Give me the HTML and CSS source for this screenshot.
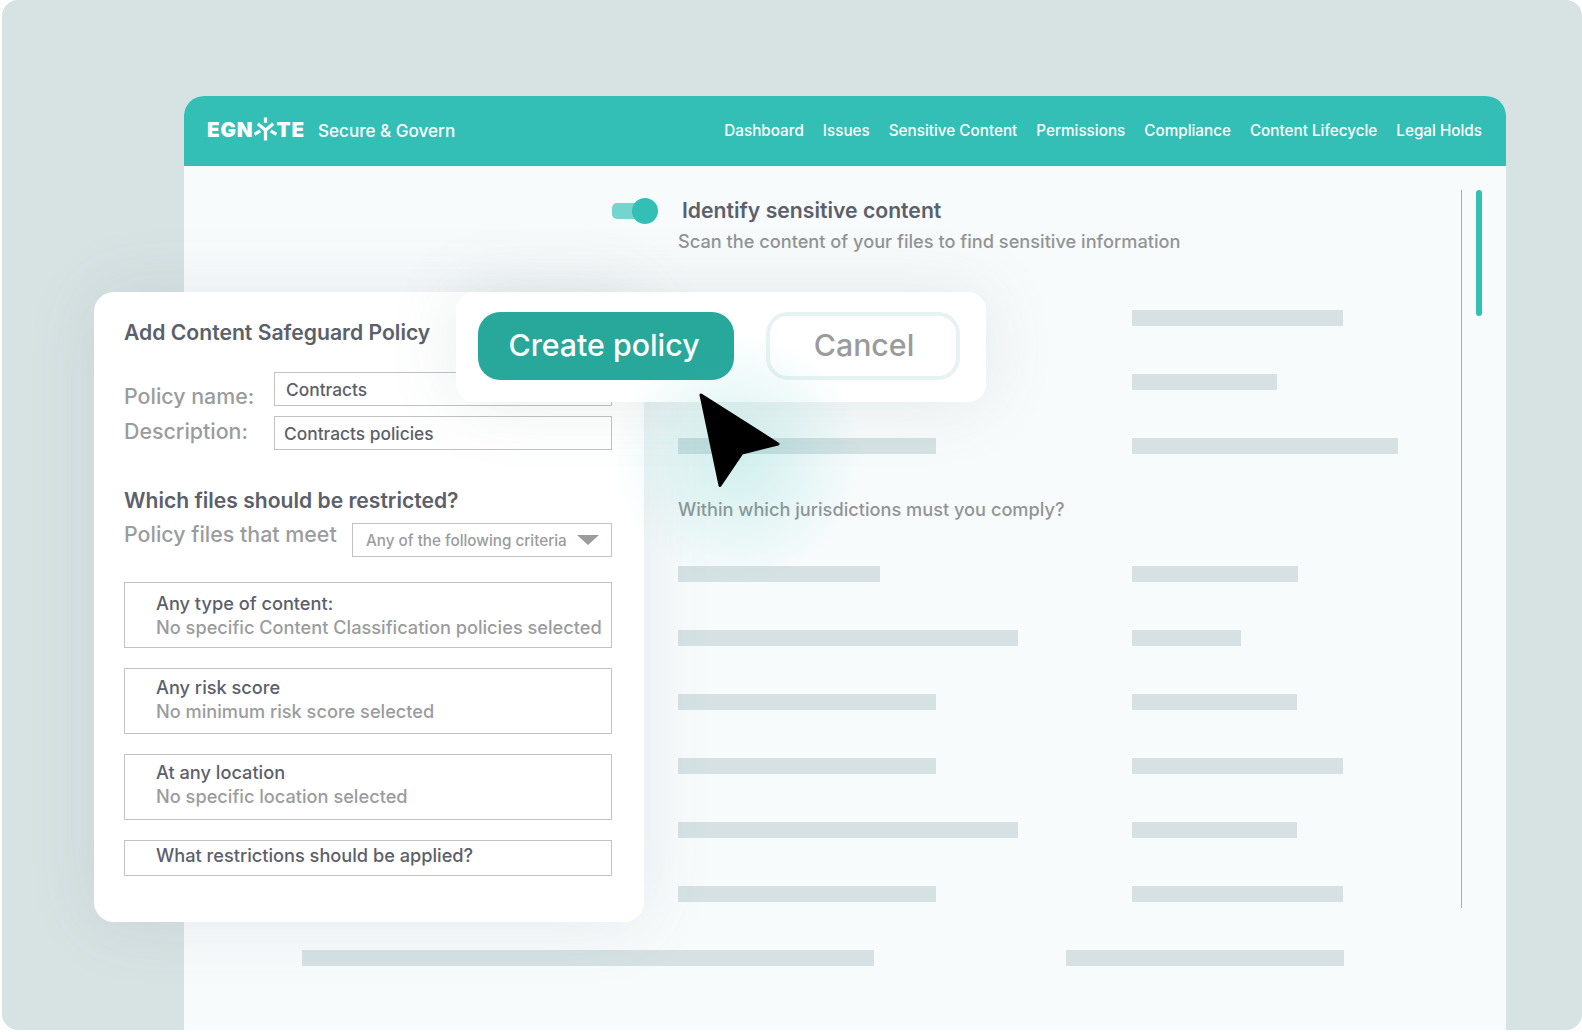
FILE: index.html
```html
<!DOCTYPE html>
<html lang="en">
    <head>
        <meta charset="UTF-8">
        <title>Egnyte Secure &amp; Govern</title>
        <link rel="stylesheet" href="styles.css">
    </head>
    <body>
        <div class="stage">
            <div class="window">
                <div class="topbar">
                    <div class="logo">
                        <span>EGN</span>
                        <svg class="logo-star" viewBox="0 0 24 24" width="23" height="24">
                            <path d="M12 0v5.500M12 24V12.500M13 14L4 6.500M11 14L20 6.500M0.500 17.500l6-3.500M23.500 17.500l-6-3.500" stroke="#fff" stroke-width="3.400" fill="none"/>
                        </svg>
                        <span>TE</span>
                    </div>
                    <div class="product">Secure &amp; Govern</div>
                    <nav class="nav">
                        <a>Dashboard</a>
                        <a>Issues</a>
                        <a>Sensitive Content</a>
                        <a>Permissions</a>
                        <a>Compliance</a>
                        <a>Content Lifecycle</a>
                        <a>Legal Holds</a>
                    </nav>
                </div>
                <div class="content">
                    <div class="identify">
                        <div class="toggle"><span class="knob"></span></div>
                        <div class="identify-title">Identify sensitive content</div>
                    </div>
                    <div class="identify-sub">Scan the content of your files to find sensitive information</div>

                    <div class="bars bars-top">
                        <div class="bar-row"><i class="w258"></i><i class="w211"></i></div>
                        <div class="bar-row"><i class="w258"></i><i class="w145"></i></div>
                        <div class="bar-row"><i class="w258"></i><i class="w266"></i></div>
                    </div>

                    <div class="question">Within which jurisdictions must you comply?</div>

                    <div class="bars">
                        <div class="bar-row"><i class="w202"></i><i class="w166"></i></div>
                        <div class="bar-row"><i class="w340"></i><i class="w109"></i></div>
                        <div class="bar-row"><i class="w258"></i><i class="w165"></i></div>
                        <div class="bar-row"><i class="w258"></i><i class="w211"></i></div>
                        <div class="bar-row"><i class="w340"></i><i class="w165"></i></div>
                        <div class="bar-row"><i class="w258"></i><i class="w211"></i></div>
                    </div>

                    <div class="bottom-row"><i class="w572"></i><i class="w279"></i></div>

                    <div class="scroll-line"></div>
                    <div class="scroll-thumb"></div>
                </div>
            </div>

            <div class="policy">
                <h2>Add Content Safeguard Policy</h2>
                <div class="field-row first-row">
                    <label class="name-label">Policy name:</label>
                    <div class="field name-field">Contracts</div>
                </div>
                <div class="field-row">
                    <label class="desc-label">Description:</label>
                    <div class="field desc-field">Contracts policies</div>
                </div>
                <h3>Which files should be restricted?</h3>
                <div class="meet-row">
                    <label>Policy files that meet</label>
                    <div class="select">Any of the following criteria<span class="arrow"></span></div>
                </div>
                <div class="box box-type">
                    <div class="box-title">Any type of content:</div>
                    <div class="box-sub">No specific Content Classification policies selected</div>
                </div>
                <div class="box box-risk">
                    <div class="box-title">Any risk score</div>
                    <div class="box-sub">No minimum risk score selected</div>
                </div>
                <div class="box box-location">
                    <div class="box-title">At any location</div>
                    <div class="box-sub">No specific location selected</div>
                </div>
                <div class="box box-single">
                    <div class="box-title">What restrictions should be applied?</div>
                </div>
            </div>

            <div class="actions">
                <button class="btn-create">Create policy</button>
                <button class="btn-cancel">Cancel</button>
            </div>

            <div class="glow"></div>
            <svg class="cursor" viewBox="0 0 84 98" width="84" height="98">
                <path d="M3 3L80 52L44 61L22 93.500Z" fill="#000" stroke="#000" stroke-width="3" stroke-linejoin="round"/>
            </svg>
        </div>
    </body>
</html>
```

FILE: styles.css
```css
* {
    box-sizing: border-box;
}
body {
    margin: 0;
    background-color: #ffffff;
    font-family: Inter, "Noto Sans", sans-serif;
    font-weight: 500;
    overflow: hidden;
}
.stage {
    position: relative;
    width: 1580px;
    height: 1030px;
    margin-left: 2px;
    padding: 96px 76px 0 182px;
    background-color: #d7e2e3;
    border-radius: 16px;
    overflow: hidden;
}
.window {
    height: 100%;
    background-color: #f8fbfc;
    border-radius: 20px 20px 0 0;
    overflow: hidden;
}
.topbar {
    display: flex;
    align-items: center;
    height: 70px;
    padding: 0 24px 2px 23px;
    background-color: #33bfb5;
    color: #ffffff;
}
.logo {
    display: flex;
    align-items: center;
    font-size: 20.500px;
    font-weight: 900;
    letter-spacing: 0.900px;
    line-height: 24px;
}
.logo-star {
    margin: -2px 0 0 0;
}
.product {
    margin-left: 13px;
    font-size: 17.100px;
}
.nav {
    display: flex;
    gap: 19px;
    margin-left: auto;
    font-size: 15.250px;
}
.content {
    position: relative;
    padding: 32px 0 0 494px;
}
.identify {
    display: flex;
    align-items: center;
    height: 26px;
    margin-left: -66px;
}
.toggle {
    position: relative;
    width: 38px;
    height: 16px;
    margin-right: 32px;
    background-color: #73d5cd;
    border-radius: 5px;
}
.knob {
    position: absolute;
    top: -5px;
    left: 20px;
    width: 26px;
    height: 26px;
    background-color: #33bfb5;
    border-radius: 50%;
}
.identify-title {
    padding-bottom: 2px;
    font-size: 21.200px;
    font-weight: 600;
    color: #5b606b;
}
.identify-sub,
.question {
    font-size: 18.200px;
    color: #929496;
    line-height: 24px;
}
.identify-sub {
    margin-top: 5px;
}
.bars {
    display: flex;
    flex-direction: column;
    gap: 48px;
}
.bars-top {
    margin-top: 57px;
}
.bar-row {
    display: grid;
    grid-template-columns: 454px 1fr;
    height: 16px;
}
.bar-row i,
.bottom-row i {
    display: block;
    height: 16px;
    background-color: #d5e1e3;
}
.question {
    margin: 43px 0 45px;
}
.bottom-row {
    display: flex;
    gap: 192px;
    margin: 48px 0 0 -376px;
}
.w109 { width: 109px; }
.w145 { width: 145px; }
.w165 { width: 165px; }
.w166 { width: 166px; }
.w202 { width: 202px; }
.w211 { width: 211px; }
.w258 { width: 258px; }
.w266 { width: 266px; }
.w279 { width: 278px; }
.w340 { width: 340px; }
.w572 { width: 572px; }
.scroll-line {
    position: absolute;
    top: 24px;
    left: 1277px;
    width: 1px;
    height: 718px;
    background-color: #a9adaf;
}
.scroll-thumb {
    position: absolute;
    top: 24px;
    left: 1292px;
    width: 6px;
    height: 126px;
    background-color: #33bfb5;
    border-radius: 3px;
}
.policy {
    position: absolute;
    top: 292px;
    left: 92px;
    width: 550px;
    height: 630px;
    padding: 26px 32px 0 30px;
    background-color: #ffffff;
    border-radius: 20px;
    box-shadow: 0 0 70px rgba(90, 110, 115, 0.12);
    color: #5b606b;
}
.policy h2 {
    margin: 0;
    font-size: 21.150px;
    font-weight: 600;
    line-height: 30px;
}
.policy h3 {
    margin: 36px 0 0;
    font-size: 21.100px;
    font-weight: 600;
    line-height: 30px;
}
.field-row {
    display: flex;
}
.first-row {
    margin-top: 24px;
}
.field-row label,
.meet-row label {
    font-size: 21.400px;
    color: #9a9c9e;
    line-height: 30px;
}
.name-label {
    width: 150px;
    padding-top: 9px;
}
.desc-label {
    width: 150px;
    padding-top: 5px;
}
.field {
    display: flex;
    align-items: center;
    width: 338px;
    height: 34px;
    border: 1px solid #c0c2c4;
    font-size: 17.350px;
}
.name-field {
    padding-left: 11px;
}
.desc-field {
    margin-top: 5px;
    padding-left: 9px;
}
.meet-row {
    display: flex;
    justify-content: space-between;
    align-items: flex-start;
    height: 63px;
    margin-top: 3px;
}
.select {
    display: flex;
    align-items: center;
    justify-content: space-between;
    width: 260px;
    height: 34px;
    margin-top: 4px;
    padding: 0 12px 0 13px;
    border: 1px solid #c0c2c4;
    font-size: 15.250px;
    color: #9a9c9e;
}
.arrow {
    width: 0;
    height: 0;
    border-left: 11px solid transparent;
    border-right: 11px solid transparent;
    border-top: 10px solid #9a9c9e;
}
.box {
    width: 488px;
    height: 66px;
    margin-bottom: 20px;
    padding-left: 31px;
    border: 1px solid #c0c2c4;
    font-size: 18.200px;
    line-height: 24px;
}
.box-type {
    padding-top: 8px;
}
.box-risk {
    padding-top: 6px;
}
.box-location {
    padding-top: 5px;
}
.box-single {
    height: 36px;
    padding-top: 2px;
}
.box-sub {
    color: #9a9c9e;
}
.actions {
    position: absolute;
    top: 292px;
    left: 454px;
    display: flex;
    gap: 32px;
    width: 530px;
    height: 110px;
    padding: 20px 0 0 22px;
    background-color: #ffffff;
    border-radius: 18px;
    box-shadow: 0 0 70px rgba(90, 110, 115, 0.14);
}
.actions button {
    height: 68px;
    padding-bottom: 4px;
    border-radius: 22px;
    font-family: Inter, "Noto Sans", sans-serif;
    font-size: 30.300px;
    font-weight: 500;
}
.btn-create {
    width: 256px;
    padding-right: 10px;
    border: none;
    background-color: #28a79b;
    color: #ffffff;
}
.btn-cancel {
    width: 194px;
    padding-left: 8px;
    border: 4px solid #e8f2f3;
    background-color: #ffffff;
    color: #999b9d;
}
.glow {
    position: absolute;
    top: 332px;
    left: 610px;
    width: 250px;
    height: 250px;
    background: radial-gradient(circle closest-side, rgba(51, 191, 181, 0.2) 0%, rgba(51, 191, 181, 0.1) 50%, rgba(51, 191, 181, 0) 100%);
    pointer-events: none;
}
.cursor {
    position: absolute;
    top: 392px;
    left: 696px;
}
```
